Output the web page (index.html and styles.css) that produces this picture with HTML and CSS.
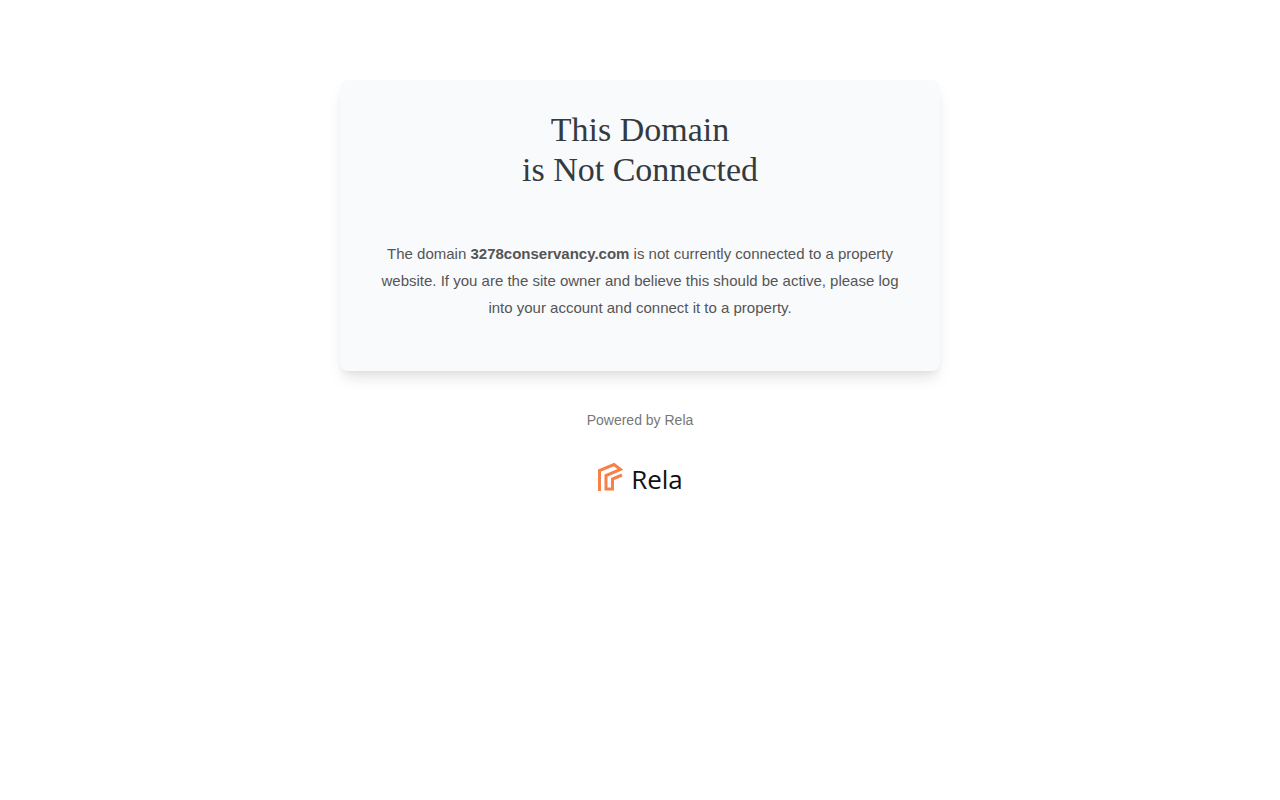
FILE: index.html
```html
<!DOCTYPE html>
<html lang="en">
	<head>
		<meta charset="UTF-8" />
		<meta name="viewport" content="width=device-width, initial-scale=1.0" />
		<title>This Domain is Not Connected</title>
		<link rel="stylesheet" href="styles.css">
	</head>
	<body>
		<main class="card">
			<h1>This Domain<br />is Not Connected</h1>
			<p>
				The domain <strong>3278conservancy.com</strong> is not currently
				connected to a property website. If you are the site owner and believe
				this should be active, please log into your account and connect it to a
				property.
			</p>
		</main>

		<footer>
			<p class="powered">Powered by Rela</p>
			<div class="logo">
				<svg width="26" height="30" viewBox="0 0 26 30" aria-hidden="true">
					<path d="M2.5 30V9.5L17 3.5L23.5 8.5L9 14.5V28H15.5V18L25 14" />
				</svg>
				<span>Rela</span>
			</div>
		</footer>
	</body>
</html>
```

FILE: styles.css
```css
body {
	margin: 0;
	padding: 80px 20px;
	background-color: #fff;
	font-family: 'Liberation Sans', Arial, sans-serif;
	text-align: center;
}

.card {
	max-width: 520px;
	margin: 0 auto;
	padding: 30px 40px 50px;
	background-color: #f9fafc;
	border-radius: 8px;
	box-shadow: 0 10px 15px -3px rgba(0, 0, 0, 0.1),
		0 4px 6px -2px rgba(0, 0, 0, 0.05);
}

h1 {
	margin: 0 0 50px;
	color: #343a40;
	font-family: 'Liberation Serif', 'Times New Roman', serif;
	font-size: 34px;
	font-weight: 400;
	line-height: 40px;
}

.card p {
	margin: 0;
	color: #555;
	font-size: 15px;
	line-height: 27px;
}

footer {
	margin-top: 40px;
}

.powered {
	margin: 0 0 32px;
	color: #777;
	font-size: 14px;
	line-height: 18px;
}

.logo {
	display: flex;
	justify-content: center;
	align-items: flex-end;
	gap: 8px;
	color: #111;
	font-family: 'Open Sans', sans-serif;
	font-size: 26px;
	font-weight: 400;
	line-height: 24px;
}

.logo path {
	fill: none;
	stroke: #f5804a;
	stroke-width: 3;
}
```
